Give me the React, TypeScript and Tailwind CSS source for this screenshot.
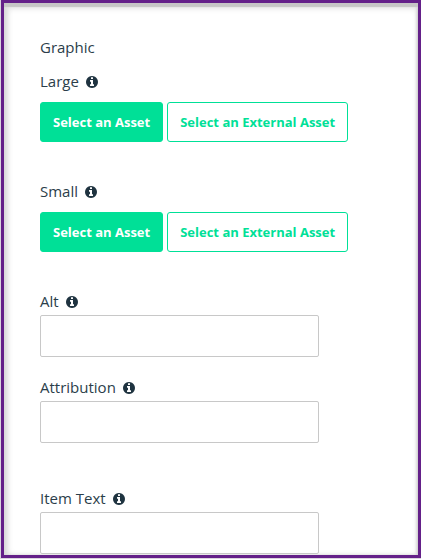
function InfoIcon() {
  return (
    <svg
      viewBox="0 0 1536 1536"
      className="mb-[3px] size-3 shrink-0 fill-[#1f3340]"
      aria-hidden="true"
    >
      <path
        transform="translate(0 1408) scale(1 -1)"
        d="M1024 160v160q0 14 -9 23t-23 9h-96v512q0 14 -9 23t-23 9h-320q-14 0 -23 -9t-9 -23v-160q0 -14 9 -23t23 -9h96v-320h-96q-14 0 -23 -9t-9 -23v-160q0 -14 9 -23t23 -9h448q14 0 23 9t9 23zM896 1056v160q0 14 -9 23t-23 9h-192q-14 0 -23 -9t-9 -23v-160q0 -14 9 -23t23 -9h192q14 0 23 9t9 23zM1536 640q0 -209 -103 -385.5t-279.5 -279.5t-385.5 -103t-385.5 103t-279.5 279.5t-103 385.5t103 385.5t279.5 279.5t385.5 103t385.5 -103t279.5 -279.5t103 -385.5z"
      />
    </svg>
  );
}

function AssetPicker({ label }: { label: string }) {
  return (
    <section className="flex flex-col gap-[11px]" aria-label={label}>
      <h3 className="flex items-end gap-[7px]">
        {label}
        <InfoIcon />
      </h3>
      <div className="flex gap-1 text-[13px] leading-5 font-bold whitespace-nowrap">
        <button
          type="button"
          className="h-10 rounded-[3px] border border-[#00e097] bg-[#00e097] px-3 text-white"
        >
          Select an Asset
        </button>
        <button
          type="button"
          className="h-10 rounded-[3px] border border-[#00e097] bg-white px-3 text-[#00e097]"
        >
          Select an External Asset
        </button>
      </div>
    </section>
  );
}

function TextField({ id, label }: { id: string; label: string }) {
  return (
    <div className="flex flex-col gap-1">
      <label htmlFor={id} className="flex items-end gap-[7px]">
        {label}
        <InfoIcon />
      </label>
      <input
        id={id}
        type="text"
        className="h-[42px] w-full max-w-[279px] rounded-[2px] border border-[#c8c8c8] bg-white px-3 outline-none"
      />
    </div>
  );
}

export default function App() {
  return (
    <div className="flex min-h-screen flex-col bg-[#d9d4dd] pb-px pl-px font-['Open_Sans','Noto_Sans',sans-serif] text-[15px] leading-5 text-[#2b3e4a]">
      <form className="flex-1 border-3 border-[#642089] bg-white pt-[34px] pr-5 pb-px pl-9 shadow-[inset_0_4px_1px_#c6c6c6,inset_0_5px_6px_#dddddd,inset_4px_0_6px_-1px_#d0d0d0,inset_-2px_0_3px_-1px_#b8b8b8]">
        <h2>Graphic</h2>
        <div className="mt-3.5 flex flex-col gap-[39px]">
          <AssetPicker label="Large" />
          <AssetPicker label="Small" />
          <div className="flex flex-col gap-5">
            <TextField id="alt" label="Alt" />
            <TextField id="attribution" label="Attribution" />
          </div>
        </div>
        <div className="mt-[45px]">
          <TextField id="item-text" label="Item Text" />
        </div>
      </form>
    </div>
  );
}
